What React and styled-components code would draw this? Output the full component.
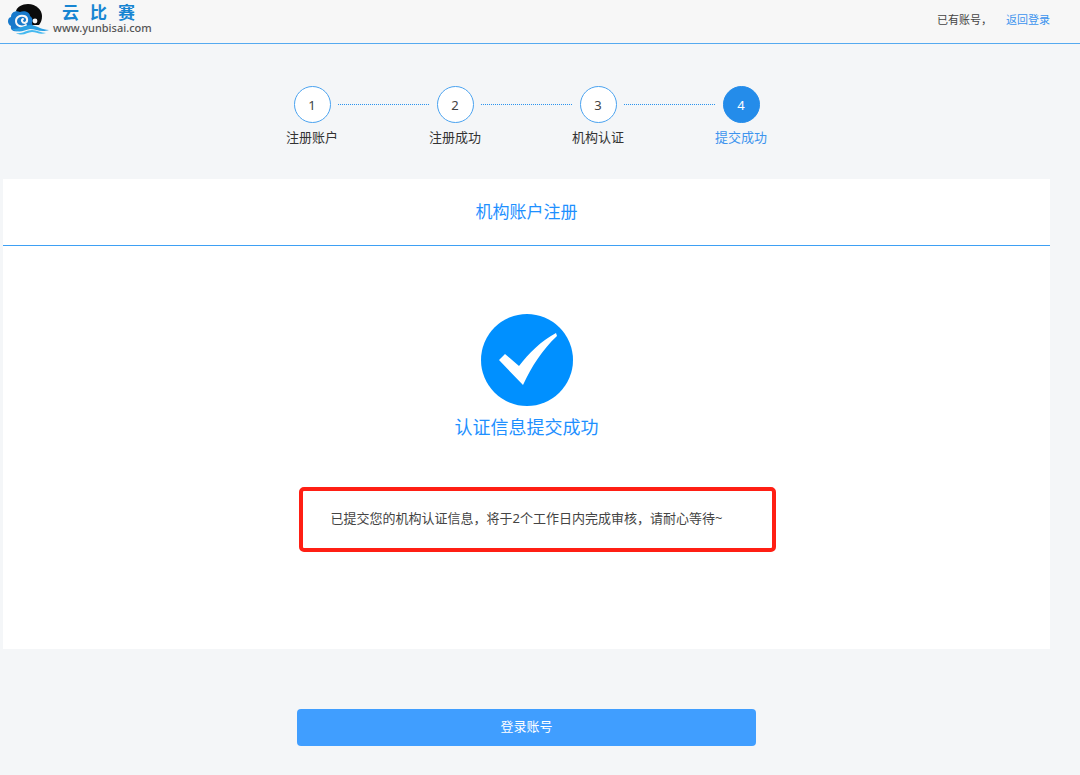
import styled, { createGlobalStyle, css } from 'styled-components'

const GlobalStyle = createGlobalStyle`
  * {
    box-sizing: border-box;
  }

  body {
    margin: 0;
    background: #f4f6f8;
    color: #444;
    font-family: 'Noto Sans', 'Noto Sans CJK SC', sans-serif;
    font-size: 13px;
    line-height: 20px;
  }
`

const Header = styled.header`
  display: flex;
  align-items: center;
  justify-content: space-between;
  height: 44px;
  padding: 0 30px 4px 8px;
  background: #f7f7f7;
  border-bottom: 1px solid #55aaf0;
`

const Brand = styled.a`
  display: flex;
  align-items: center;
  gap: 4px;
  text-decoration: none;
`

const BrandText = styled.span`
  display: flex;
  flex-direction: column;
`

const BrandName = styled.span`
  display: flex;
  gap: 11px;
  padding-left: 9px;
  color: #1785d2;
  font-size: 17px;
  font-weight: 700;
  line-height: 16px;
`

const BrandUrl = styled.span`
  color: #555;
  font-size: 11px;
  font-weight: 500;
  line-height: 13px;
`

const Account = styled.div`
  display: flex;
  gap: 14px;
  font-size: 11px;
  line-height: 16px;
`

const LoginLink = styled.a`
  color: #3d94ee;
  text-decoration: none;
`

const Page = styled.main`
  margin: 0 30px 0 3px;
`

const Steps = styled.ol`
  display: flex;
  justify-content: center;
  margin: 0;
  padding: 42px 0 32px;
  list-style: none;
`

const Step = styled.li`
  display: flex;
  color: ${({ $active }) => ($active ? '#3d94ee' : '#333')};

  &:not(:last-child)::after {
    content: '';
    width: 91px;
    height: 1px;
    margin-top: 18px;
    border-top: 1px dotted #2a93ee;
  }
`

const StepBody = styled.div`
  display: flex;
  flex-direction: column;
  align-items: center;
  gap: 4px;
  width: 52px;
  white-space: nowrap;
`

const StepNumber = styled.span`
  display: flex;
  align-items: center;
  justify-content: center;
  width: 37px;
  height: 37px;
  border: 1px solid #4ba3f0;
  border-radius: 50%;
  background: #fff;
  color: #444;

  ${({ $active }) =>
    $active &&
    css`
      border-color: #248cea;
      background: #248cea;
      color: #fff;
    `}
`

const Panel = styled.section`
  padding-bottom: 97px;
  background: #fff;
`

const PanelTitle = styled.h1`
  margin: 0;
  padding: 20px 0;
  border-bottom: 1px solid #3ea0f4;
  color: #1e90ff;
  font-size: 17px;
  font-weight: 400;
  line-height: 26px;
  text-align: center;
`

const Result = styled.div`
  display: flex;
  flex-direction: column;
  align-items: center;
  padding-top: 68px;
`

const ResultTitle = styled.h2`
  margin: 8px 0 47px;
  color: #1e90ff;
  font-size: 18px;
  font-weight: 400;
  line-height: 26px;
`

const Notice = styled.p`
  position: relative;
  margin: 0;
  padding: 21px 32px 24px;
  white-space: nowrap;

  &::after {
    content: '';
    position: absolute;
    inset: 0 -22px 0 0;
    border: 4px solid #ff1f14;
    border-radius: 5px;
  }
`

const Actions = styled.div`
  display: flex;
  justify-content: center;
  padding: 60px 0 30px;
`

const LoginButton = styled.button`
  width: 459px;
  max-width: 100%;
  height: 37px;
  padding: 0 0 4px;
  border: 0;
  border-radius: 4px;
  background: #409eff;
  color: #fff;
  font: inherit;
  cursor: pointer;
`

const steps = ['注册账户', '注册成功', '机构认证', '提交成功']
const current = 3

function WaveLogo() {
  return (
    <svg width="41" height="32" viewBox="0 0 41 32" aria-hidden="true">
      <path d="M8 7C9 3 14 0 20 0c8 0 14 6 14 12 0 4-1 6-3 9H18z" fill="#0b0b0b" />
      <path
        d="M3 22C-1 20-1 14 3 13 3 8 8 6 12 8c4-2 10 0 10 4 3 2 3 5 2 7 0 2 1 3 3 4-7 0-11 4-17 4-4 1-8-1-7-5z"
        fill="#1779cb"
      />
      <path
        d="M18 21c-4 3-10 1-10-4 0-4 4-6 8-5 4 1 4 6 1 7-3 0-4-3-2-4"
        fill="none"
        stroke="#f7f7f7"
        strokeWidth="2"
        strokeLinecap="round"
      />
      <circle cx="27" cy="17" r="2.4" fill="#f7f7f7" />
      <path d="M4 25c8 0 12-4 19-4 7 1 11 5 18 5-8 3-13-1-19-1-6 1-11 5-18 0z" fill="#2b9fe2" />
      <path d="M8 29c7 1 10-3 16-3 5 0 9 3 14 3-6 2-10-1-14-1-5 0-9 5-16 1z" fill="#45b9f0" />
    </svg>
  )
}

function SuccessIcon() {
  return (
    <svg width="92" height="92" viewBox="0 0 92 92" aria-hidden="true">
      <circle cx="46" cy="46" r="46" fill="#0090ff" />
      <path d="M18 46l6-6 14 12C48 39 60 27 75 19l1 3C61 36 51 52 42 71z" fill="#fff" />
    </svg>
  )
}

export default function App() {
  return (
    <>
      <GlobalStyle />
      <Header>
        <Brand href="#">
          <WaveLogo />
          <BrandText>
            <BrandName>
              <span>云</span>
              <span>比</span>
              <span>赛</span>
            </BrandName>
            <BrandUrl>www.yunbisai.com</BrandUrl>
          </BrandText>
        </Brand>
        <Account>
          <span>已有账号，</span>
          <LoginLink href="#">返回登录</LoginLink>
        </Account>
      </Header>
      <Page>
        <Steps>
          {steps.map((label, i) => (
            <Step key={label} $active={i === current}>
              <StepBody>
                <StepNumber $active={i === current}>{i + 1}</StepNumber>
                <span>{label}</span>
              </StepBody>
            </Step>
          ))}
        </Steps>
        <Panel>
          <PanelTitle>机构账户注册</PanelTitle>
          <Result>
            <SuccessIcon />
            <ResultTitle>认证信息提交成功</ResultTitle>
            <Notice>已提交您的机构认证信息，将于2个工作日内完成审核，请耐心等待~</Notice>
          </Result>
        </Panel>
        <Actions>
          <LoginButton type="button">登录账号</LoginButton>
        </Actions>
      </Page>
    </>
  )
}
